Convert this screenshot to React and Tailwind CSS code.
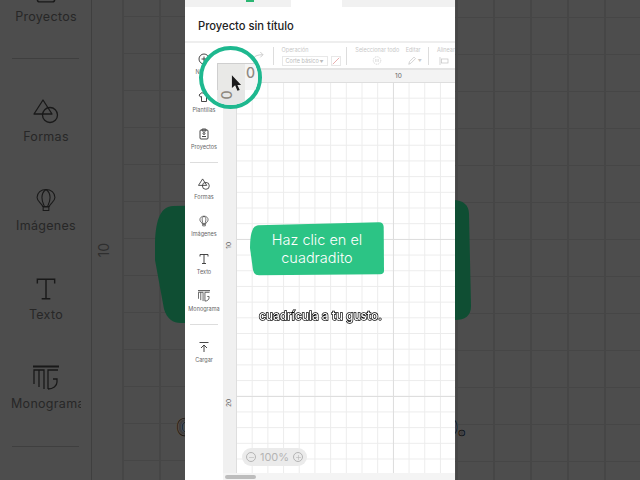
import { Minus, Plus } from 'lucide-react';

function IconNuevo() {
  return (
    <svg viewBox="0 0 24 24" className="w-full h-full" fill="none" stroke="currentColor" strokeWidth="1.8">
      <circle cx="12" cy="12" r="10" />
      <path d="M12 7v10M7 12h10" />
    </svg>
  );
}

function IconPlantillas() {
  return (
    <svg viewBox="0 0 24 24" className="w-full h-full" fill="none" stroke="currentColor" strokeWidth="1.8" strokeLinejoin="round">
      <path d="M8 3 2 8l3 4 2-1v10h10V11l2 1 3-4-6-5c-1 2-7 2-8 0Z" />
    </svg>
  );
}

function IconProyectos() {
  return (
    <svg viewBox="0 0 24 24" className="w-full h-full" fill="none" stroke="currentColor" strokeWidth="1.8" strokeLinejoin="round">
      <rect x="4" y="4" width="16" height="18" rx="2" />
      <rect x="8" y="2" width="8" height="4" rx="1" />
      <circle cx="12" cy="11" r="2" />
      <path d="M8 17h8" />
    </svg>
  );
}

function IconFormas() {
  return (
    <svg viewBox="0 0 26 26" className="w-full h-full" fill="none" stroke="currentColor" strokeWidth="1.8" strokeLinejoin="round">
      <path d="M10 2 1 16h18Z" />
      <circle cx="17" cy="17" r="7.500" />
    </svg>
  );
}

function IconImagenes() {
  return (
    <svg viewBox="-4 0 32 28" className="w-full h-full" fill="none" stroke="currentColor" strokeWidth="1.8" strokeLinejoin="round">
      <path d="M12 1C6 1 1 5 1 11c0 5 6 7 7 11h8c1-4 7-6 7-11 0-6-5-10-11-10Z" />
      <path d="M12 1C9 3 7 6 7 11c0 5 2 8 3 11M12 1c3 2 5 5 5 10 0 5-2 8-3 11" />
      <path d="M8.500 22.500h7v4.500h-7Z" />
    </svg>
  );
}

function IconTexto() {
  return (
    <svg viewBox="0 0 24 24" className="w-full h-full" fill="none" stroke="currentColor" strokeWidth="1.8">
      <path d="M4 7V3h16v4M12 3v18M8 21h8" />
    </svg>
  );
}

function IconMonograma() {
  return (
    <svg viewBox="0 0 26 26" className="w-full h-full" fill="none" stroke="currentColor" strokeWidth="1.6">
      <path d="M0 1.500h26" strokeWidth="2" />
      <path d="M1 19V5h10v19M6 5v17" />
      <path d="M15 24V5h10M15 24c5 0 9-3 9-7v-3h-4" />
    </svg>
  );
}

function IconCargar() {
  return (
    <svg viewBox="0 0 24 24" className="w-full h-full" fill="none" stroke="currentColor" strokeWidth="1.8">
      <path d="M3 3h18M12 22V8M6 14l6-6 6 6" />
    </svg>
  );
}

function SmallItem({ icon, label }) {
  return (
    <div className="h-[37.500px] flex flex-col items-center overflow-hidden">
      <div className="w-[12px] h-[12px] text-[#333]">{icon}</div>
      <span className="mt-[3px] text-[5.500px] leading-[8px] text-[#666] whitespace-nowrap">{label}</span>
    </div>
  );
}

function DimItem({ icon, label }) {
  return (
    <div className="h-[89px] flex flex-col items-center w-[70px] overflow-hidden">
      <div className="w-[26px] h-[28px] text-[#191919] [&_svg]:stroke-[1.300]">{icon}</div>
      <span className={`mt-[4px] text-[12.500px] leading-[16px] tracking-[0.3px] text-[#272727] whitespace-nowrap ${label === 'Monograma' ? 'self-start' : ''}`}>{label}</span>
    </div>
  );
}

const dimGrid = 'bg-[linear-gradient(#464646_1px,transparent_1px),linear-gradient(90deg,#464646_2px,transparent_2px)] bg-[size:37px_37px]';

export default function App() {
  return (
    <div className="relative w-[640px] h-[480px] flex overflow-hidden bg-[#4d4d4d] font-['Inter',sans-serif]">
      {/* video blurred left */}
      <div className="w-[185px] flex shrink-0 overflow-hidden">
        <aside className="w-[92px] shrink-0 border-r border-[#3f3f3f] -mt-[23px]">
          <div className="h-[81px] pl-[11px]">
            <DimItem icon={<IconProyectos />} label="Proyectos" />
          </div>
          <div className="mx-[12px] h-px bg-[#3f3f3f]" />
          <div className="mt-[38px] pl-[11px]">
            <DimItem icon={<IconFormas />} label="Formas" />
            <DimItem icon={<IconImagenes />} label="Imágenes" />
            <DimItem icon={<IconTexto />} label="Texto" />
            <DimItem icon={<IconMonograma />} label="Monograma" />
          </div>
          <div className="mx-[12px] -mt-[7px] h-px bg-[#3f3f3f]" />
        </aside>
        <div className="w-[30px] shrink-0 pt-[243px] pl-[3px]">
          <span className="block [writing-mode:vertical-rl] rotate-180 text-[14px] leading-[18px] text-[#2f2f2f]">10</span>
        </div>
        <div className={`flex-1 bg-[position:0px_16px] ${dimGrid}`} />
      </div>

      {/* video blurred right */}
      <div className={`flex-1 ml-[270px] bg-[position:1px_17px] ${dimGrid}`} />

      {/* big copies of caption and subtitle, behind the phone */}
      <svg viewBox="0 0 316 123" className="absolute left-[155px] top-[200px] w-[316px] h-[123px]">
        <path fill="#0f4e33" d="M18 6 298 0c10 0 16 5 16 14l2 92c0 10-6 14-16 14L26 123c-8 0-14-4-17-14L0 60C-1 22 4 7 18 6Z" />
      </svg>
      <p className="absolute left-[177px] top-[408px] w-[290px] text-[28px] leading-[34px] font-medium whitespace-nowrap text-[#3f3f3f] [-webkit-text-stroke:2.500px_#000] [paint-order:stroke_fill] [text-shadow:0_0_2px_#aaa]">cuadrícula a tu gusto.</p>

      {/* phone recording */}
      <main className="absolute left-[185px] top-0 w-[270px] h-[480px] bg-white flex flex-col overflow-hidden">
        <div className="h-[7px] flex bg-[#f1f1f1]">
          <div className="w-[61px] relative">
            <div className="absolute left-[61px] top-0 w-[8px] h-[2px] bg-[#2bb673]" />
          </div>
          <div className="ml-[45px] w-[51px] bg-white" />
        </div>
        <header className="h-[36px] flex items-center pl-[13px] border-b-2 border-[#eeeeee]">
          <h1 className="text-[11.200px] font-medium text-[#222] pt-[4px]">Proyecto sin título</h1>
        </header>
        <div className="flex flex-1 min-h-0">
          <aside className="w-[38px] shrink-0 pt-[10px]">
            <SmallItem icon={<IconNuevo />} label="Nuevo" />
            <SmallItem icon={<IconPlantillas />} label="Plantillas" />
            <SmallItem icon={<IconProyectos />} label="Proyectos" />
            <div className="mx-[5px] -mt-[4px] mb-[15px] h-px bg-[#dddddd]" />
            <SmallItem icon={<IconFormas />} label="Formas" />
            <SmallItem icon={<IconImagenes />} label="Imágenes" />
            <SmallItem icon={<IconTexto />} label="Texto" />
            <SmallItem icon={<IconMonograma />} label="Monograma" />
            <div className="mx-[5px] -mt-[4px] mb-[16px] h-px bg-[#dddddd]" />
            <SmallItem icon={<IconCargar />} label="Cargar" />
          </aside>
          <div className="flex-1 min-w-0 flex flex-col">
            {/* toolbar */}
            <div className="h-[27px] flex items-start border-b-2 border-[#e4e4e4] text-[5.500px] leading-[7px] text-[#c8c8c8] whitespace-nowrap overflow-hidden">
              <div className="w-[52px] h-[18px] mt-[4px] border-r border-[#dddddd] flex justify-end items-center pr-[8px]">
                <svg viewBox="0 0 14 10" className="w-[13px] h-[9px]" fill="none" stroke="#c8c8c8" strokeWidth="1">
                  <path d="M1 7c2-3 6-4 11-4M9 0l3 3-3 3" />
                </svg>
              </div>
              <div className="w-[76px] h-[18px] mt-[4px] border-r border-[#dddddd] pl-[8px]">
                <p>Operación</p>
                <div className="mt-[2px] flex gap-[3px]">
                  <div className="w-[46px] h-[10px] border border-[#e8e8e8] text-[#bbb] flex items-center justify-between px-[3px]">
                    <span>Corte básico</span><span className="text-[4px]">▼</span>
                  </div>
                  <svg viewBox="0 0 10 10" className="w-[10px] h-[10px] border border-[#e8e8e8]" stroke="#e39a9a" strokeWidth="1">
                    <path d="M1 9 9 1" />
                  </svg>
                </div>
              </div>
              <div className="w-[60px] h-[18px] mt-[4px] pl-[8px] flex flex-col items-start">
                <p>Seleccionar todo</p>
                <svg viewBox="0 0 12 12" className="ml-[17px] mt-[2px] w-[10px] h-[10px]" fill="none" stroke="#c4c4c4" strokeWidth="0.9" strokeDasharray="1.5 1">
                  <circle cx="6" cy="6" r="5" />
                  <path d="M4.500 4v4M7.500 4v4" strokeDasharray="none" />
                </svg>
              </div>
              <div className="w-[24px] h-[18px] mt-[4px] border-r border-[#dddddd]">
                <p>Editar</p>
                <div className="mt-[2px] flex items-center gap-[1px] pl-[2px]">
                  <svg viewBox="0 0 12 12" className="w-[9px] h-[9px]" fill="none" stroke="#c4c4c4" strokeWidth="1">
                    <path d="M1 11 2 7.500 8 1.500l2 2-6 6Z" />
                  </svg>
                  <span className="text-[4px]">▼</span>
                </div>
              </div>
              <div className="pl-[8px] mt-[4px]">
                <p>Alinear</p>
                <svg viewBox="0 0 12 10" className="ml-[2px] mt-[3px] w-[10px] h-[8px]" fill="none" stroke="#c4c4c4" strokeWidth="0.9">
                  <path d="M1 0v10" /><rect x="3" y="2.500" width="8" height="5" />
                </svg>
              </div>
            </div>
            {/* top ruler */}
            <div className="h-[12px] shrink-0 bg-[#f3f3f3] pl-[172px] text-[6.500px] leading-[12px] text-[#666]">10</div>
            <div className="flex-1 min-h-0 flex">
              {/* left ruler */}
              <div className="w-[13px] shrink-0 bg-[#f0f0f0] text-[6.500px] leading-[13px] text-[#666]">
                <div className="h-[158px]" />
                <div className="h-[157px] flex items-start pt-[2px]">
                  <span className="[writing-mode:vertical-rl] rotate-180">10</span>
                </div>
                <div className="flex items-start pt-[2px]">
                  <span className="[writing-mode:vertical-rl] rotate-180">20</span>
                </div>
              </div>
              <div className="flex-1 bg-[linear-gradient(#dedede_1px,transparent_1px),linear-gradient(90deg,#dedede_1px,transparent_1px),linear-gradient(#ececec_1px,transparent_1px),linear-gradient(90deg,#ececec_1px,transparent_1px)] bg-[size:157px_157px,157px_157px,15.700px_15.700px,15.700px_15.700px]" />
            </div>
            {/* scroll bar */}
            <div className="h-[7px] shrink-0 bg-[#f4f4f4] pt-[2px] pl-[2px]">
              <div className="w-[31px] h-[4px] rounded-full bg-[#bdbdbd]" />
            </div>
          </div>
        </div>

        {/* caption */}
        <div className="absolute left-[65px] top-[222px] w-[134px] h-[54px] flex items-center justify-center">
          <svg viewBox="0 0 134 54" className="absolute inset-0 w-full h-full">
            <path fill="#2cc485" d="M8 3.300 129 .3Q133.500.3 133.700 5L134 49Q134 52 130 52.300L9 53.300Q4 53.300 3 48L0 26Q0 4 8 3.300Z" />
          </svg>
          <p className="relative text-center text-[14.500px] leading-[18px] text-white font-light">Haz clic en el<br />cuadradito</p>
        </div>
        <p className="absolute left-[74px] top-[309px] text-[11.900px] leading-[14px] font-medium text-white whitespace-nowrap [will-change:transform] [-webkit-text-stroke:1.400px_#000] [paint-order:stroke_fill]">cuadrícula a tu gusto.</p>

        {/* zoom pill */}
        <div className="absolute left-[57px] top-[448px] w-[65px] h-[18px] rounded-full bg-[#ebebeb] flex items-center justify-between px-[4px] text-[#b4b4b4]">
          <span className="w-[10px] h-[10px] rounded-full border border-[#b4b4b4] flex items-center justify-center"><Minus size={7} strokeWidth={2} /></span>
          <span className="text-[11px] leading-[18px]">100%</span>
          <span className="w-[10px] h-[10px] rounded-full border border-[#b4b4b4] flex items-center justify-center"><Plus size={7} strokeWidth={2} /></span>
        </div>

        {/* magnifier */}
        <div className="absolute left-[14px] top-[46px] w-[63px] h-[63px] rounded-full border-[4px] border-[#1eb88f] bg-white overflow-hidden">
          <div className="absolute left-[14px] top-[13px] w-[28px] h-[27px] bg-[#e9e9e7] border-t border-l border-[#cfcfcf]" />
          <div className="absolute left-[42px] top-[13px] w-[20px] h-[27px] bg-[#f4f4f4] border-t border-[#cfcfcf] text-[14px] leading-[18px] text-[#8d8880] font-medium pl-[1px]">0</div>
          <div className="absolute left-[14px] top-[40px] w-[28px] h-[20px] bg-[#e6e6e6] flex justify-center items-start">
            <span className="block -rotate-90 mr-[8px] -mt-[2px] text-[14px] leading-[14px] text-[#8d8880] font-medium">0</span>
          </div>
          <svg viewBox="0 0 12 18" className="absolute left-[28px] top-[25px] w-[11px] h-[17px]">
            <path d="M1 0v14l3.500-3 2.500 6 2.500-1-2.500-5.500H11Z" fill="#1b1b1b" />
          </svg>
        </div>
      </main>
    </div>
  );
}
